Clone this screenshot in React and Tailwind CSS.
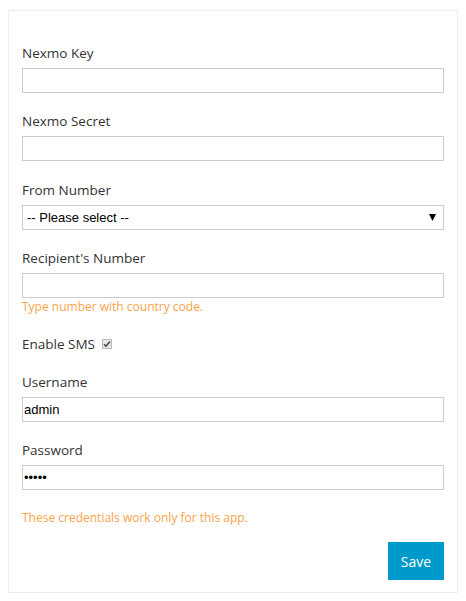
import React from "react";

const Label = ({ children }) => (
    <label className="block text-[13.5px] leading-[20px] text-[#333] mb-[5px]">{children}</label>
);

const TextBox = ({ type = "text", value = "" }) => (
    <input
        type={type}
        defaultValue={value}
        className="block w-full h-[25px] border border-[#ccc] bg-white px-[1px] text-[13px] text-black outline-none"
        style={{ fontFamily: "'Liberation Sans', Arial, sans-serif" }}
    />
);

export default function App() {
    return (
        <div className="bg-white min-h-[601px] pt-[10px] px-[8px]" style={{ fontFamily: "'Open Sans', 'Noto Sans', sans-serif" }}>
            <div className="w-[450px] border border-[#eee] px-[13px] pt-[32px] pb-[12px]">
                <div className="mb-[18px]">
                    <Label>Nexmo Key</Label>
                    <TextBox />
                </div>
                <div className="mb-[19px]">
                    <Label>Nexmo Secret</Label>
                    <TextBox />
                </div>
                <div className="mb-[18px]">
                    <Label>From Number</Label>
                    <div className="relative h-[25px] border border-[#ccc] bg-white">
                        <span
                            className="absolute left-[4px] top-[3px] text-[13px] leading-[17px] text-black"
                            style={{ fontFamily: "'Liberation Sans', Arial, sans-serif" }}
                        >
                            -- Please select --
                        </span>
                        <svg className="absolute right-[7px] top-[8px]" width="7" height="7" viewBox="0 0 7 7">
                            <path d="M0 0H7L3.5 7Z" fill="#000" />
                        </svg>
                    </div>
                </div>
                <div>
                    <Label>Recipient's Number</Label>
                    <TextBox />
                    <p className="text-[12px] leading-[18px] text-[#f7a44a]">Type number with country code.</p>
                </div>
                <div className="flex items-center mt-[18px] h-[20px]">
                    <span className="text-[13.5px] text-[#333]">Enable SMS</span>
                    <span className="ml-[7px] w-[10px] h-[10px] border border-[#bbb] bg-[#e6e6e6] flex items-center justify-center">
                        <svg width="8" height="8" viewBox="0 0 8 8">
                            <path d="M1 4.2L3 6.2L7 1.5" stroke="#444" strokeWidth="1.5" fill="none" />
                        </svg>
                    </span>
                </div>
                <div className="mt-[18px] mb-[18px]">
                    <Label>Username</Label>
                    <TextBox value="admin" />
                </div>
                <div>
                    <Label>Password</Label>
                    <TextBox type="password" value="admin" />
                </div>
                <p className="text-[12px] leading-[18px] text-[#f7a44a] mt-[19px]">These credentials work only for this app.</p>
                <div className="flex justify-end mt-[15px]">
                    <button className="w-[56px] h-[38px] bg-[#0099cc] text-white text-[14px]">Save</button>
                </div>
            </div>
        </div>
    );
}
